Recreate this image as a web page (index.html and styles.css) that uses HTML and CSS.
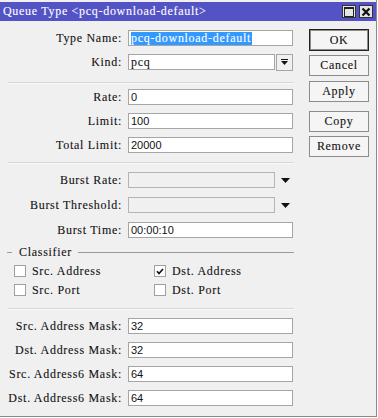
FILE: index.html
```html
<!DOCTYPE html>
<html lang="en">
<head>
    <meta charset="UTF-8">
    <title>Queue Type &lt;pcq-download-default&gt;</title>
    <link rel="stylesheet" href="styles.css">
</head>
<body>
    <div class="window">
        <div class="titlebar">
            <span class="title">Queue Type &lt;pcq-download-default&gt;</span>
            <div class="title-buttons">
                <span class="tbtn">
                    <svg width="10" height="10" viewBox="0 0 10 10"><rect x="0.5" y="0.5" width="9" height="9" fill="none" stroke="#222"/><rect x="0" y="0" width="10" height="2" fill="#222"/></svg>
                </span>
                <span class="tbtn">
                    <svg width="10" height="10" viewBox="0 0 10 10"><path d="M1.5 1.5l7 7M8.5 1.5l-7 7" stroke="#111" stroke-width="2.2"/></svg>
                </span>
            </div>
        </div>

        <div class="content">
            <div class="form">
                <div class="group">
                    <div class="row">
                        <label>Type Name:</label>
                        <div class="field mono"><span class="selected">pcq-download-default</span></div>
                    </div>
                    <div class="row">
                        <label>Kind:</label>
                        <div class="field mono short">pcq</div>
                        <span class="drop-btn">
                            <svg width="7" height="6" viewBox="0 0 7 6"><rect width="7" height="1" fill="#111"/><path d="M0 2h7l-3.5 4z" fill="#111"/></svg>
                        </span>
                    </div>
                </div>

                <div class="sep first"></div>

                <div class="group rates">
                    <div class="row"><label>Rate:</label><div class="field">0</div></div>
                    <div class="row"><label>Limit:</label><div class="field">100</div></div>
                    <div class="row"><label>Total Limit:</label><div class="field">20000</div></div>
                </div>

                <div class="sep second"></div>

                <div class="group burst">
                    <div class="row">
                        <label>Burst Rate:</label>
                        <div class="field short disabled"></div>
                        <svg class="arrow" width="9" height="5" viewBox="0 0 9 5"><path d="M0 0h9l-4.5 5z" fill="#111"/></svg>
                    </div>
                    <div class="row">
                        <label>Burst Threshold:</label>
                        <div class="field short disabled"></div>
                        <svg class="arrow" width="9" height="5" viewBox="0 0 9 5"><path d="M0 0h9l-4.5 5z" fill="#111"/></svg>
                    </div>
                    <div class="row"><label>Burst Time:</label><div class="field">00:00:10</div></div>
                </div>

                <div class="legend"><span>Classifier</span></div>

                <div class="checks">
                    <div class="check"><span class="box"></span>Src. Address</div>
                    <div class="check"><span class="box"><svg width="11" height="11" viewBox="0 0 11 11"><path d="M2.2 5.2l2.2 2.6 4.4-5" fill="none" stroke="#111" stroke-width="1.8"/></svg></span>Dst. Address</div>
                    <div class="check"><span class="box"></span>Src. Port</div>
                    <div class="check"><span class="box"></span>Dst. Port</div>
                </div>

                <div class="sep third"></div>

                <div class="group masks">
                    <div class="row"><label>Src. Address Mask:</label><div class="field">32</div></div>
                    <div class="row"><label>Dst. Address Mask:</label><div class="field">32</div></div>
                    <div class="row"><label>Src. Address6 Mask:</label><div class="field">64</div></div>
                    <div class="row"><label>Dst. Address6 Mask:</label><div class="field">64</div></div>
                </div>
            </div>

            <div class="buttons">
                <button class="btn default">OK</button>
                <button class="btn">Cancel</button>
                <button class="btn apply">Apply</button>
                <button class="btn copy">Copy</button>
                <button class="btn">Remove</button>
            </div>
        </div>
    </div>
</body>
</html>
```

FILE: styles.css
```css
* {
    margin: 0;
    padding: 0;
    box-sizing: border-box;
}

body {
    background: #ffffff;
    font-family: 'Liberation Serif', serif;
    font-size: 12px;
    letter-spacing: 0.7px;
    color: #111;
}

.window {
    width: 377px;
    height: 417px;
    padding-top: 2px;
    background: #f0f0f0;
    border-right: 1px solid #8a8a8a;
    border-bottom: 1px solid #8a8a8a;
    -webkit-text-stroke: 0.1px #111;
}

.titlebar {
    height: 19px;
    background: #5353c6;
    display: flex;
    align-items: center;
    justify-content: space-between;
    padding: 0 3px 0 3px;
}

.title {
    color: #fff;
    -webkit-text-stroke: 0.1px #fff;
}

.title-buttons {
    display: flex;
    gap: 3px;
}

.tbtn {
    width: 14px;
    height: 13px;
    background: #e4e4e4;
    border: 1px solid #333;
    display: flex;
    align-items: center;
    justify-content: center;
}

.content {
    display: flex;
}

.form {
    width: 294px;
    padding-top: 9px;
}

.group {
    display: flex;
    flex-direction: column;
    gap: 8px;
}

.group.burst {
    gap: 9px;
    margin-top: 8px;
}

.group.rates {
    margin-top: 5px;
}

.group.masks {
    margin-top: 8px;
}

.row {
    display: flex;
    align-items: center;
    height: 16px;
}

.row label {
    width: 122px;
    margin-right: 6px;
    text-align: right;
    white-space: nowrap;
}

.field {
    width: 165px;
    height: 16px;
    background: #fff;
    border: 1px solid #a5a5a5;
    padding: 0 2px;
    font-family: 'Liberation Sans', sans-serif;
    font-size: 11px;
    letter-spacing: 0;
    line-height: 14px;
    -webkit-text-stroke: 0;
    white-space: nowrap;
}

.field.mono {
    font-family: 'Liberation Serif', serif;
    font-size: 12px;
    letter-spacing: 0.7px;
    -webkit-text-stroke: 0.1px #111;
}

.field.short {
    width: 147px;
}

.field.disabled {
    background: #f0f0f0;
    border-color: #b4b4b4;
}

.selected {
    display: inline-block;
    background: #3399ff;
    color: #fff;
    -webkit-text-stroke: 0.1px #fff;
    line-height: 13px;
    padding-right: 1px;
}

.drop-btn {
    width: 17px;
    height: 17px;
    margin-left: 1px;
    background: #f0f0f0;
    border: 1px solid #a5a5a5;
    display: flex;
    align-items: center;
    justify-content: center;
}

.arrow {
    margin-left: 6px;
}

.sep {
    margin-left: 8px;
    width: 285px;
    border-top: 1px solid #d6d6d6;
    border-bottom: 1px solid #fafafa;
}

.sep.first {
    margin-top: 12px;
}

.sep.second {
    margin-top: 9px;
}

.sep.third {
    margin-top: 12px;
}

.legend {
    margin-top: 8px;
    height: 12px;
    display: flex;
    align-items: center;
}

.legend::before {
    content: "";
    width: 5px;
    margin-left: 7px;
    border-top: 1px solid #9a9a9a;
}

.legend span {
    margin: 0 6px 0 7px;
    line-height: 12px;
}

.legend::after {
    content: "";
    flex: 1;
    border-top: 1px solid #9a9a9a;
}

.checks {
    display: grid;
    grid-template-columns: 140px 140px;
    row-gap: 7px;
    margin-top: 7px;
    padding-left: 14px;
}

.check {
    display: flex;
    align-items: center;
    height: 12px;
    white-space: nowrap;
}

.box {
    width: 12px;
    height: 12px;
    margin-right: 6px;
    background: #fff;
    border: 1px solid #a0a0a0;
    display: flex;
    align-items: center;
    justify-content: center;
}

.buttons {
    margin-left: 15px;
    padding-top: 8px;
    display: flex;
    flex-direction: column;
    gap: 4px;
    width: 60px;
}

.btn {
    height: 21px;
    background: #f5f5f5;
    border: 1px solid #8c8c8c;
    font-family: 'Liberation Serif', serif;
    font-size: 12px;
    letter-spacing: 0.7px;
    color: #111;
    -webkit-text-stroke: 0.1px #111;
}

.btn.default {
    height: 22px;
    border-color: #222;
    box-shadow: inset 0 0 0 1px #8c8c8c;
}

.btn.apply {
    margin-top: 1px;
}

.btn.copy {
    margin-top: 5px;
}
```
